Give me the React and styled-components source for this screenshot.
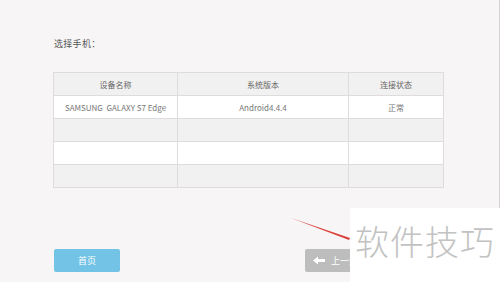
import React from 'react'
import styled, { createGlobalStyle } from 'styled-components'

const GlobalStyle = createGlobalStyle`
  html, body {
    margin: 0;
    padding: 0;
    background: #f7f5f5;
    font-family: "Noto Sans CJK SC", "Noto Sans", sans-serif;
  }
`

const Page = styled.div`
  position: relative;
  width: 500px;
  height: 282px;
  overflow: hidden;
`

const Panel = styled.div`
  box-sizing: border-box;
  width: 500px;
  height: 282px;
  padding-left: 53px;
  border-right: 1px solid #d4d2d2;
  display: flex;
  flex-direction: column;
`

const Title = styled.div`
  margin-top: 37px;
  margin-left: 1px;
  font-size: 9px;
  line-height: 14px;
  color: #555;
  letter-spacing: 0.3px;
`

const Table = styled.table`
  margin-top: 21px;
  width: 390px;
  border-collapse: collapse;
  table-layout: fixed;
  font-size: 8px;
  color: #777;
`

const Cell = styled.td`
  height: 22px;
  padding: 0;
  border: 1px solid #dedcdc;
  text-align: center;
  background: ${p => (p.$alt ? '#f2f1f1' : '#ffffff')};
`

const Head = styled(Cell).attrs({ as: 'th' })`
  font-weight: normal;
  color: #666;
  background: #f2f1f1;
`

const Footer = styled.div`
  margin-top: 61px;
  margin-left: 1px;
  display: flex;
  align-items: center;
`

const Button = styled.div`
  height: 23px;
  width: ${p => p.$w}px;
  border-radius: 2px;
  background: ${p => p.$bg};
  color: #fff;
  font-size: 9px;
  display: flex;
  align-items: center;
  justify-content: center;
  gap: 6px;
`

const Spacer = styled.div`
  width: 185px;
`

const Watermark = styled.div`
  position: absolute;
  left: 350px;
  top: 208px;
  right: 0;
  bottom: 0;
  background: #fff;
  color: #c2c2c2;
  font-size: 34px;
  font-weight: 300;
  line-height: 1;
  letter-spacing: 1px;
  padding: 16px 0 0 5px;
`

const Arrow = styled.svg`
  position: absolute;
  left: 288px;
  top: 214px;
`

const rows = [
  ['SAMSUNG  GALAXY S7 Edge', 'Android4.4.4', '正常'],
  ['', '', ''],
  ['', '', ''],
  ['', '', ''],
]

export default function App() {
  return (
    <Page>
      <GlobalStyle />
      <Panel>
        <Title>选择手机：</Title>
        <Table>
          <colgroup>
            <col style={{ width: 124 }} />
            <col style={{ width: 171 }} />
            <col style={{ width: 95 }} />
          </colgroup>
          <thead>
            <tr>
              <Head>设备名称</Head>
              <Head>系统版本</Head>
              <Head>连接状态</Head>
            </tr>
          </thead>
          <tbody>
            {rows.map((r, i) => (
              <tr key={i}>
                {r.map((c, j) => (
                  <Cell key={j} $alt={i % 2 === 1} style={{ whiteSpace: 'pre' }}>{c}</Cell>
                ))}
              </tr>
            ))}
          </tbody>
        </Table>
        <Footer>
          <Button $w={66} $bg="#72c3e6">首页</Button>
          <Spacer />
          <Button $w={70} $bg="#bdbdbd" style={{ justifyContent: 'flex-start', paddingLeft: 8 }}>
            <svg width="12" height="9" viewBox="0 0 12 9">
              <path d="M0 4.5 L5 0.5 V3 H12 V6 H5 V8.5 Z" fill="#fff" />
            </svg>
            上一步
          </Button>
        </Footer>
      </Panel>
      <Arrow width="64" height="28" viewBox="0 0 64 28">
        <path d="M3 4 L62 24 L61 26 Z" fill="#d9403a" />
      </Arrow>
      <Watermark>软件技巧</Watermark>
    </Page>
  )
}
